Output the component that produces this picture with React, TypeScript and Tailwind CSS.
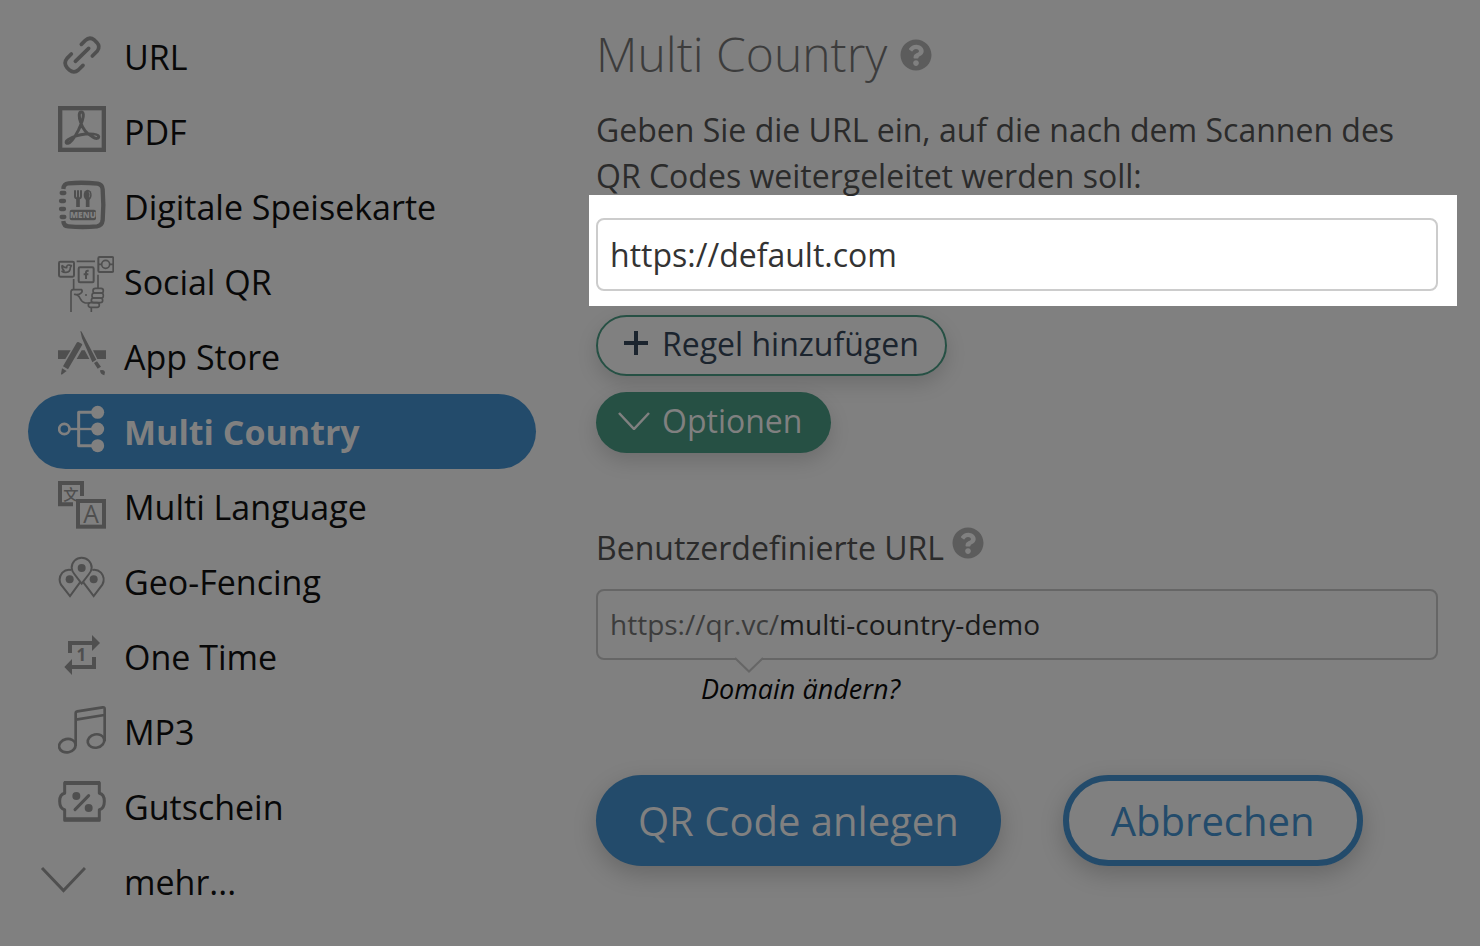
import type { ReactNode } from "react";
import { FaQuestionCircle } from "react-icons/fa";

/* Menu icons share one drawing grid: 168 x 225 units shown at 56 x 75 px. */
function Icon({ children, className = "text-[#4f4f4f]" }: { children: ReactNode; className?: string }) {
  return (
    <svg
      aria-hidden="true"
      viewBox="0 0 168 225"
      className={`h-[75px] w-14 shrink-0 ${className}`}
      fill="none"
      stroke="currentColor"
    >
      {children}
    </svg>
  );
}

const LinkIcon = () => (
  <Icon>
    <g strokeWidth="11" strokeLinecap="round" strokeLinejoin="round" transform="translate(-114 3)">
      <path d="M166 124 L206 85" />
      <path d="M184 73 L196 61 Q209 49 223 60 L230 67 Q242 80 232 93 L217 108" />
      <path d="M154 102 L141 115 Q130 128 141 143 L148 150 Q162 161 175 150 L189 136" />
    </g>
  </Icon>
);

const PdfIcon = () => (
  <Icon>
    <g transform="translate(-114 -222)">
      <rect x="120.500" y="264.500" width="131" height="125" strokeWidth="13" />
      <path
        strokeWidth="9"
        strokeLinejoin="round"
        d="M184 276 C176 276 176 290 182 307 C187 323 200 341 217 350 C228 358 237 356 236 349 C234 342 215 341 197 342 C176 344 157 351 144 359 C136 364 137 371 144 370 C153 368 165 350 175 331 C184 312 191 296 190 284 Q189 276 184 276 Z"
      />
    </g>
  </Icon>
);

const MenuCardIcon = () => (
  <Icon>
    <g transform="translate(-114 3)">
      <path
        strokeWidth="13"
        d="M130 57 Q131 41 145 40 Q188 36 233 41 Q247 44 248 58 Q252 105 248 151 Q246 167 231 169 Q188 173 145 169 Q131 168 130 153"
      />
      <g strokeWidth="13" strokeLinecap="round">
        <path d="M125 69h8M123 93h9M123 117h9M125 141h8" />
      </g>
      <g strokeWidth="6" strokeLinecap="round">
        <path d="M165 63v16q0 7 9 7q9 0 9-7v-16M174 63v20" />
      </g>
      <path strokeWidth="11" d="M174 84v27M203 82v29" />
      <ellipse cx="203" cy="75" rx="12" ry="16" fill="currentColor" stroke="none" />
      <path stroke="#808080" strokeWidth="2" d="M207 65q4 7 1 17" />
      <rect x="149" y="119" width="79" height="32" rx="6" fill="currentColor" stroke="none" />
      <text
        x="189"
        y="144"
        textAnchor="middle"
        fontSize="25"
        fontWeight="800"
        fill="#808080"
        stroke="none"
        className="font-['Open_Sans',sans-serif]"
      >
        MENU
      </text>
    </g>
  </Icon>
);

const SocialIcon = () => (
  <Icon>
    <g transform="translate(-114 -222)" strokeWidth="6" strokeLinejoin="round">
      <rect x="117" y="275" width="45" height="45" rx="4" />
      <rect x="176" y="292" width="45" height="45" rx="4" />
      <rect x="235" y="261" width="45" height="45" rx="4" />
      <circle cx="257" cy="283" r="12" strokeWidth="5" />
      <path d="M235 283h10M269 283h10M170 274h55M161 327v31M234 314v40" strokeWidth="5" />
      <path
        strokeWidth="5"
        d="M126 286q6 8 14 7q0-9 7-8l7 2l-3 6q0 13-13 14q-7 1-12-3l6-2q-7-6-6-16"
      />
      <path strokeWidth="6" d="M206 302h-3q-5 0-5 6v19M191 313h14" />
      <path
        strokeWidth="5"
        d="M153 426v-60q0-6 6-7h26q4 6-3 11q-7 6-18 3q12 1 16 12q4 11 16 14h14M214 414v12"
      />
      <rect x="219" y="355" width="31" height="14" rx="7" strokeWidth="5" />
      <rect x="216" y="369" width="34" height="15" rx="7" strokeWidth="5" />
      <rect x="214" y="384" width="34" height="14" rx="7" strokeWidth="5" />
      <rect x="205" y="398" width="33" height="14" rx="7" strokeWidth="5" />
      <circle cx="198" cy="375" r="3" fill="currentColor" stroke="none" />
    </g>
  </Icon>
);

const AppStoreIcon = () => (
  <Icon>
    <g transform="translate(-114 3)" fill="currentColor" stroke="none">
      <path d="M114 91h38l-16 26h-22zM185 91h9l14 26h-38zM219 91h39v26h-26z" />
      <path d="M175 66l10 5q3 2 1 5l-42 72l-15-9l41-71q2-3 5-2z" />
      <path d="M126 145l14 8l-15 11q-2-1-2-3z" />
      <path d="M181 33q4 0 6 6l42 80l-12 8l-31-72z" />
      <path d="M231 124l12 16l-10 6l-11-17zM240 151q12-4 15 5l-2 10q-13-3-13-15z" />
    </g>
  </Icon>
);

const TreeIcon = () => (
  <Icon className="text-[#808080]">
    <g transform="translate(-114 -222)">
      <circle cx="133" cy="327" r="15.500" strokeWidth="8" />
      <path strokeWidth="9" strokeLinejoin="round" d="M233 277h-57v100h57" />
      <path strokeWidth="7" d="M150 327h80" />
      <g fill="currentColor" stroke="none">
        <circle cx="233" cy="277" r="19.500" />
        <circle cx="233" cy="327" r="19.500" />
        <circle cx="233" cy="377" r="19.500" />
      </g>
    </g>
  </Icon>
);

const LanguageIcon = () => (
  <Icon>
    <g transform="translate(-114 3)" strokeWidth="12">
      <path d="M159 103h-39v-64h66v39" />
      <rect x="174" y="93" width="78" height="77" />
      <text
        x="153"
        y="89"
        textAnchor="middle"
        fontSize="46"
        fontWeight="500"
        fill="currentColor"
        stroke="none"
        className="font-['Noto_Sans_CJK_SC',sans-serif]"
      >
        文
      </text>
      <text
        x="213"
        y="158"
        textAnchor="middle"
        fontSize="74"
        fill="currentColor"
        stroke="none"
        className="font-['Open_Sans',sans-serif]"
      >
        A
      </text>
    </g>
  </Icon>
);

const PinsIcon = () => (
  <Icon>
    <g transform="translate(-114 -222)" strokeWidth="6">
      <path d="M185 341l-22-29q-8-10-8-19a30 30 0 0 1 60 0q0 9-8 19z" />
      <path d="M153 300q-15-3-26 8q-14 17-4 36l27 34l30-41" />
      <path d="M217 300q15-3 26 8q14 17 4 36l-26 34l-31-41" />
      <g fill="currentColor" stroke="none">
        <circle cx="185" cy="294" r="12" />
        <circle cx="149" cy="328" r="12" />
        <circle cx="221" cy="328" r="12" />
      </g>
    </g>
  </Icon>
);

const RepeatIcon = () => (
  <Icon>
    <g transform="translate(-114 3)">
      <path strokeWidth="12" d="M150 99v-30h67M222 111v30h-67" />
      <path fill="currentColor" stroke="none" d="M216 45l24 24l-24 24zM156 117l-23 24l23 24z" />
      <text
        x="184"
        y="123"
        textAnchor="middle"
        fontSize="51"
        fontWeight="700"
        fill="currentColor"
        stroke="none"
        className="font-['Open_Sans',sans-serif]"
      >
        1
      </text>
    </g>
  </Icon>
);

const MusicIcon = () => (
  <Icon>
    <g transform="translate(-114 -222)" strokeWidth="8" strokeLinejoin="round">
      <ellipse cx="142" cy="377" rx="25" ry="20" transform="rotate(-12 142 377)" />
      <ellipse cx="228" cy="363" rx="25" ry="20" transform="rotate(-12 228 363)" />
      <path d="M167 378V280q0-5 5-6l76-12q6-1 6 5v97M168 299l85-14" />
    </g>
  </Icon>
);

const CouponIcon = () => (
  <Icon>
    <g transform="translate(-114 3)">
      <path
        strokeWidth="9"
        strokeLinejoin="round"
        d="M134 38h104v32q15 3 15 24q0 22-15 25v32h-104v-32q-15-3-15-25q0-21 15-24z"
      />
      <path strokeWidth="12" d="M132 39h108M132 148h108" />
      <path strokeWidth="9" strokeLinecap="round" d="M165 119l41-42" />
      <g fill="currentColor" stroke="none">
        <circle cx="169" cy="78" r="12" />
        <circle cx="206" cy="114" r="12" />
      </g>
    </g>
  </Icon>
);

const items = [
  { label: "URL", icon: LinkIcon },
  { label: "PDF", icon: PdfIcon },
  { label: "Digitale Speisekarte", icon: MenuCardIcon },
  { label: "Social QR", icon: SocialIcon },
  { label: "App Store", icon: AppStoreIcon },
  { label: "Multi Country", icon: TreeIcon, active: true },
  { label: "Multi Language", icon: LanguageIcon },
  { label: "Geo-Fencing", icon: PinsIcon },
  { label: "One Time", icon: RepeatIcon },
  { label: "MP3", icon: MusicIcon },
  { label: "Gutschein", icon: CouponIcon },
];

function Sidebar() {
  return (
    <nav aria-label="QR Code Typ" className="w-[536px] shrink-0 pt-[19px] pl-7">
      <ul>
        {items.map(({ label, icon: ItemIcon, active }) => (
          <li key={label}>
            <a
              href="#"
              aria-current={active ? "page" : undefined}
              className={`flex items-center gap-[10px] rounded-full pl-[30px] ${
                active ? "bg-[#234b6b] font-bold text-[#808080]" : "text-[#080808]"
              }`}
            >
              <ItemIcon />
              <span className="pt-[2px]">{label}</span>
            </a>
          </li>
        ))}
        <li>
          <a href="#" className="flex h-[75px] items-center gap-[38px] pl-3 text-[#080808]">
            <svg aria-hidden="true" viewBox="0 0 46 32" className="h-8 w-[46px]" fill="none" stroke="#4f4f4f" strokeWidth="3">
              <path d="M2 2 L23.500 24.500 L45 2" />
            </svg>
            <span className="pt-[2px]">mehr...</span>
          </a>
        </li>
      </ul>
    </nav>
  );
}

function HelpButton() {
  return (
    <button type="button" aria-label="Hilfe" className="text-[#5c5c5c]">
      <FaQuestionCircle className="size-8" />
    </button>
  );
}

export default function App() {
  return (
    <div className="flex min-h-screen bg-[#808080] font-['Open_Sans',sans-serif] text-[34px] text-[#2b2b2b]">
      <Sidebar />
      <main className="min-w-0 flex-1 pt-5 pr-[23px] pl-[53px]">
        <div className="pr-[19px] pl-[7px]">
          <div className="flex items-center gap-[13px]">
            <h1 className="text-5xl leading-[68px] font-light text-[#3c3c3c]">Multi Country</h1>
            <div className="flex pt-[2px]">
              <HelpButton />
            </div>
          </div>
          <label htmlFor="target" className="mt-[19px] block text-[32px] leading-[46px]">
            Geben Sie die URL ein, auf die nach dem Scannen des QR Codes weitergeleitet werden soll:
          </label>
        </div>

        <div className="-mt-1 bg-white pt-[23px] pr-[19px] pb-[15px] pl-[7px]">
          <input
            id="target"
            type="text"
            defaultValue="https://default.com"
            className="block h-[73px] w-full rounded-lg border-2 border-[#ccc] bg-white px-3 text-[32px] text-[#333] outline-none"
          />
        </div>

        <div className="flex flex-col items-start gap-4 pt-[9px] pr-[19px] pl-[7px] text-[32px]">
          <button
            type="button"
            className="flex h-[61px] items-center gap-[14px] rounded-full border-2 border-[#265044] px-[26px] pb-1 text-[#1b242e] shadow-[0_8px_20px_rgba(0,0,0,0.15)]"
          >
            <svg aria-hidden="true" viewBox="0 0 24 26" className="h-[26px] w-6" stroke="currentColor" strokeWidth="4">
              <path d="M12 0v24M0 12h24" />
            </svg>
            Regel hinzufügen
          </button>
          <button
            type="button"
            className="flex h-[61px] items-center gap-3 rounded-full bg-[#265044] pr-[29px] pb-[3px] pl-[22px] text-[#808080] shadow-[0_8px_20px_rgba(0,0,0,0.15)]"
          >
            <svg aria-hidden="true" viewBox="0 0 32 18" className="h-[18px] w-8" fill="none" stroke="currentColor" strokeWidth="2.500">
              <path d="M1 1 L16 17 L31 1" />
            </svg>
            Optionen
          </button>
        </div>

        <div className="pt-[70px] pr-[19px] pl-[7px]">
          <div className="flex items-start gap-2">
            <label htmlFor="slug" className="pt-[2px] text-[32px] leading-[46px]">
              Benutzerdefinierte URL
            </label>
            <div className="flex pt-1">
              <HelpButton />
            </div>
          </div>
          <div className="mt-[18px] flex h-[71px] items-center rounded-lg border-2 border-[#666] px-3 pb-[2px] text-[28px]">
            <span className="text-[#3c3c3c]">https://qr.vc/</span>
            <input
              id="slug"
              type="text"
              defaultValue="multi-country-demo"
              className="min-w-0 flex-1 bg-transparent text-[#1a1a1a] outline-none"
            />
          </div>
          <a href="#" className="-mt-[3px] ml-[105px] flex w-fit flex-col text-[27px] leading-8 text-[#050505] italic">
            <svg aria-hidden="true" viewBox="0 0 32 16" className="ml-8 h-4 w-8" fill="none">
              <path d="M2 1h28l-14 14z" fill="#808080" />
              <path d="M2 1 L16 14.500 L30 1" stroke="#666" strokeWidth="2" />
            </svg>
            Domain ändern?
          </a>
        </div>

        <div className="flex gap-[62px] pt-[70px] pr-[19px] pl-[7px] text-[40px]">
          <button
            type="submit"
            className="h-[91px] rounded-full bg-[#234b6b] px-[42px] text-[#808080] shadow-[0_8px_24px_rgba(0,0,0,0.2)]"
          >
            QR Code anlegen
          </button>
          <button
            type="button"
            className="h-[91px] rounded-full border-6 border-[#234b6b] px-[42px] text-[#234b6b] shadow-[0_8px_24px_rgba(0,0,0,0.2)]"
          >
            Abbrechen
          </button>
        </div>
      </main>
    </div>
  );
}
